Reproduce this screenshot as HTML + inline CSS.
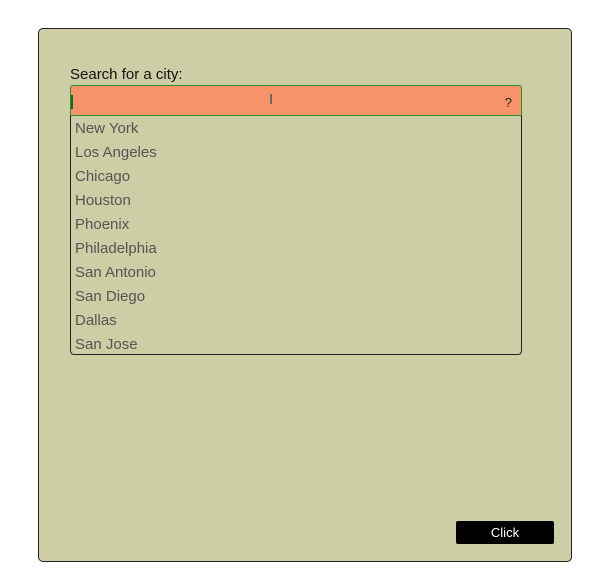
<!DOCTYPE html>
<html><head><style>
body{margin:0;width:614px;height:582px;background:#fff;font-family:"Liberation Sans",sans-serif;position:relative;overflow:hidden}
.panel{position:absolute;left:38px;top:28px;width:532px;height:532px;background:#cdcda6;border:1px solid #222;border-radius:5px}
.lbl{position:absolute;left:70px;top:66px;font-size:15px;color:#111}
.inp{position:absolute;left:70px;top:85px;width:450px;height:29px;background:#f7936a;border:1px solid #2a8a2a;border-radius:3px 3px 0 0}
.inp .caret{position:absolute;left:0;top:9px;width:2px;height:14px;background:#1a6a1a}
.q{position:absolute;right:9px;top:9px;font-size:13px;color:#222}
.ib{position:absolute;left:198px;top:5px;font-size:15px;color:#456}
.list{position:absolute;left:70px;top:116px;width:450px;height:238px;border:1px solid #222;border-top:none;border-radius:0 0 4px 4px}
.list div{height:24px;line-height:25px;padding-left:4px;font-size:15px;color:#555}
.btn{position:absolute;left:456px;top:521px;width:98px;height:23px;background:#000;color:#fff;border-radius:2px;text-align:center;line-height:23px;font-size:13px}
</style></head><body>
<div class="panel"></div>
<div class="lbl">Search for a city:</div>
<div class="inp"><div class="caret"></div><span class="ib">I</span><span class="q">?</span></div>
<div class="list">
<div>New York</div><div>Los Angeles</div><div>Chicago</div><div>Houston</div><div>Phoenix</div><div>Philadelphia</div><div>San Antonio</div><div>San Diego</div><div>Dallas</div><div>San Jose</div>
</div>
<div class="btn">Click</div>
</body></html>
